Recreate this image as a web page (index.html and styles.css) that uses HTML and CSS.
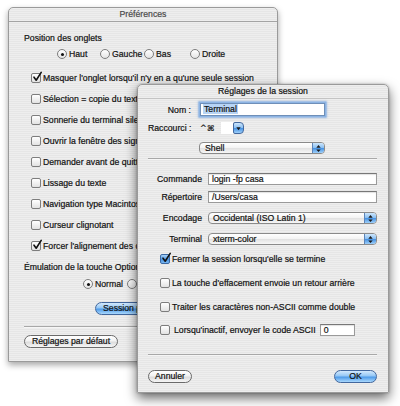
FILE: index.html
```html
<!DOCTYPE html>
<html lang="fr">
<head>
<meta charset="utf-8">
<title>Préférences</title>
<link rel="stylesheet" href="styles.css">
</head>
<body>
<section class="win win-back">
  <header class="titlebar">Préférences</header>
  <div class="back-body">
    <div class="line first">Position des onglets</div>
    <div class="radio-grid">
      <label class="opt"><span class="radio on"></span>Haut</label>
      <label class="opt"><span class="radio"></span>Gauche</label>
      <label class="opt"><span class="radio"></span>Bas</label>
      <label class="opt"><span class="radio"></span>Droite</label>
    </div>
    <ul class="checks">
      <li><span class="cb on"><svg viewBox="0 0 10 10"><path d="M2 5.2 L4.2 8.2 L9.2 0.4"/></svg></span>Masquer l'onglet lorsqu'il n'y en a qu'une seule session</li>
      <li><span class="cb"></span>Sélection = copie du texte</li>
      <li><span class="cb"></span>Sonnerie du terminal silencieuse</li>
      <li><span class="cb"></span>Ouvrir la fenêtre des signets au démarrage</li>
      <li><span class="cb"></span>Demander avant de quitter</li>
      <li><span class="cb"></span>Lissage du texte</li>
      <li><span class="cb"></span>Navigation type Macintosh</li>
      <li><span class="cb"></span>Curseur clignotant</li>
      <li><span class="cb on"><svg viewBox="0 0 10 10"><path d="M2 5.2 L4.2 8.2 L9.2 0.4"/></svg></span>Forcer l'alignement des caractères</li>
    </ul>
    <div class="line emul">Émulation de la touche Option</div>
    <div class="radio-row">
      <label class="opt"><span class="radio on"></span>Normal</label>
      <label class="opt"><span class="radio"></span>Méta</label>
    </div>
    <div class="btn default session">Session par défaut</div>
    <hr class="sep back-sep">
    <div class="btn reset">Réglages par défaut</div>
  </div>
</section>

<section class="win win-front">
  <header class="titlebar">Réglages de la session</header>
  <div class="front-body">
    <div class="top-row r-nom">
      <span class="lbl-top">Nom :</span>
      <div class="field focus"><span class="sel">Terminal</span></div>
    </div>
    <div class="top-row r-rac">
      <span class="lbl-top">Raccourci :</span>
      <span class="keys">^⌘</span>
      <span class="keybox"></span>
      <span class="keybtn"><svg viewBox="0 0 8 8"><path d="M1.5 2.5 L6.5 2.5 L4 6 Z"/></svg></span>
    </div>
    <div class="top-row r-shell">
      <span class="lbl-top"></span>
      <div class="popup shell"><span class="ptext">Shell</span><span class="arrows"><svg viewBox="0 0 8 10"><path d="M4 1 L6.5 4 L1.5 4 Z M4 9 L6.5 6 L1.5 6 Z"/></svg></span></div>
    </div>
    <hr class="sep sep-1">
    <div class="form-row r-cmd">
      <span class="lbl">Commande</span>
      <div class="field">login -fp casa</div>
    </div>
    <div class="form-row r-rep">
      <span class="lbl">Répertoire</span>
      <div class="field">/Users/casa</div>
    </div>
    <div class="form-row r-enc">
      <span class="lbl">Encodage</span>
      <div class="popup"><span class="ptext">Occidental (ISO Latin 1)</span><span class="arrows"><svg viewBox="0 0 8 10"><path d="M4 1 L6.5 4 L1.5 4 Z M4 9 L6.5 6 L1.5 6 Z"/></svg></span></div>
    </div>
    <div class="form-row r-term">
      <span class="lbl">Terminal</span>
      <div class="popup"><span class="ptext">xterm-color</span><span class="arrows"><svg viewBox="0 0 8 10"><path d="M4 1 L6.5 4 L1.5 4 Z M4 9 L6.5 6 L1.5 6 Z"/></svg></span></div>
    </div>
    <div class="chk r-fermer"><span class="cb on blue"><svg viewBox="0 0 10 10"><path d="M2 5.2 L4.2 8.2 L9.2 0.4"/></svg></span>Fermer la session lorsqu'elle se termine</div>
    <div class="chk r-chk"><span class="cb"></span>La touche d'effacement envoie un retour arrière</div>
    <div class="chk r-chk"><span class="cb"></span>Traiter les caractères non-ASCII comme double</div>
    <div class="chk r-idle"><span class="cb"></span><span class="idle-text">Lorsqu'inactif, envoyer le code ASCII</span><div class="field small">0</div></div>
    <hr class="sep sep-2">
    <div class="btn-row">
      <div class="btn cancel">Annuler</div>
      <div class="btn default ok">OK</div>
    </div>
  </div>
</section>
</body>
</html>
```

FILE: styles.css
```css
* { box-sizing: border-box; }
html, body { margin: 0; padding: 0; background: #fff; }
body {
  width: 400px; height: 406px; overflow: hidden; position: relative;
  font-family: "Liberation Sans", Arial, "DejaVu Sans", sans-serif;
  font-size: 8.7px; color: #111;
  -webkit-text-stroke: 0.2px currentColor;
}

/* windows on the desktop */
.win {
  position: absolute;
  display: flex; flex-direction: column;
  background: repeating-linear-gradient(to bottom, #eeeeee 0 1px, #e6e6e6 1px 2px);
  border: 1px solid #9a9a9a;
  border-radius: 5px 5px 0 0;
  overflow: hidden;
}
.win-back { left: 8px; top: 7px; width: 270px; height: 355px; z-index: 1;
  box-shadow: 0 3px 6px rgba(0,0,0,0.35); }
.win-front { left: 137px; top: 84px; width: 252px; height: 309px; z-index: 2;
  box-shadow: 0 5px 12px rgba(0,0,0,0.6), 0 0 2px rgba(0,0,0,0.3); }

.titlebar {
  flex: none; height: 14px; line-height: 13px; text-align: center;
  border-bottom: 1px solid #a4a4a4; color: #4a4a4a;
}
.win-front .titlebar { color: #111; border-bottom-color: #c4c4c4; }

/* shared controls */
.line { height: 12px; line-height: 12px; white-space: nowrap; }
.opt { display: flex; align-items: center; gap: 2px; white-space: nowrap; height: 12px; }
.radio {
  flex: none; width: 10px; height: 10px; border-radius: 50%;
  border: 1px solid #7d7d7d;
  background: linear-gradient(#ffffff, #e4e4e4);
  display: inline-flex; align-items: center; justify-content: center;
}
.radio.on::after { content: ""; width: 3px; height: 3px; border-radius: 50%; background: #111; }
.cb {
  flex: none; width: 10px; height: 10px; border-radius: 2px;
  border: 1px solid #7d7d7d;
  background: linear-gradient(#ffffff, #e2e2e2);
  position: relative; margin-right: 2px;
}
.cb svg { position: absolute; left: 0; top: -2px; width: 10px; height: 10px; overflow: visible; }
.cb svg path { fill: none; stroke: #111; stroke-width: 1.6; stroke-linecap: round; stroke-linejoin: round; }
.cb.blue { background: linear-gradient(#a9d2f8, #4b95e3 55%, #78b5f0); border-color: #3c6aa5; }

.btn {
  height: 13px; line-height: 11px; white-space: nowrap;
  display: flex; align-items: center; justify-content: center;
  border: 1px solid #6a6a6a; border-radius: 7px;
  background: linear-gradient(#ffffff, #f2f2f2 45%, #dcdcdc 55%, #f6f6f6);
  color: #111;
}
.btn.default {
  background: linear-gradient(#d3e9fd, #94c7f5 45%, #4f9be9 55%, #a9d8fd);
  border-color: #42679d;
}

.sep { border: 0; border-top: 1px solid #a8a8a8; border-bottom: 1px solid #f6f6f6; height: 0; margin: 0; }

.field {
  height: 12px; line-height: 10px; padding: 0 3px; white-space: nowrap; overflow: hidden;
  background: #fff; border: 1px solid #9a9a9a; border-top-color: #777;
  box-shadow: inset 0 1px 1px rgba(0,0,0,0.12);
}
.popup {
  height: 12px; display: flex; align-items: center; overflow: hidden;
  border: 1px solid #8a8a8a; border-radius: 4px;
  background: linear-gradient(#ffffff, #f3f3f3 50%, #e3e3e3 55%, #f7f7f7);
}
.ptext { padding-left: 4px; white-space: nowrap; }
.arrows {
  margin-left: auto; flex: none; width: 12px; height: 100%;
  border-left: 1px solid #5c84b8;
  background: linear-gradient(#cde6fc, #86bdf2 50%, #4a94e3 55%, #9fd0fa);
  display: flex; align-items: center; justify-content: center;
}
.arrows svg { width: 7px; height: 9px; }
.arrows svg path, .keybtn svg path { fill: #1a1a1a; }

/* back window */
.back-body { padding: 0 15px; display: flex; flex-direction: column; }
.line.first { margin-top: 10px; }
.radio-grid {
  margin-top: 4px; padding-left: 33px;
  display: grid; grid-template-columns: 43px 44px 46px auto;
}
.checks { list-style: none; margin: 12px 0 0; padding: 0 0 0 7px; display: flex; flex-direction: column; gap: 9px; }
.checks li { height: 12px; display: flex; align-items: center; white-space: nowrap; }
.line.emul { margin-top: 9px; }
.radio-row { margin-top: 5px; padding-left: 59px; display: flex; gap: 4px; }
.btn.session { margin: 12px 0 0 71px; width: 96px; justify-content: flex-start; padding-left: 7px; }
.back-sep { margin-top: 11px; }
.btn.reset { margin-top: 7px; width: 94px; align-self: flex-start; }

/* front window */
.front-body { padding: 0 11px 0 10px; display: flex; flex-direction: column; }
.top-row { display: flex; align-items: center; }
.lbl-top { flex: none; width: 43px; text-align: right; white-space: nowrap; margin-right: 8px; }
.r-nom { margin-top: 4px; height: 13px; }
.field.focus {
  width: 125px; height: 13px; margin-left: 1px;
  box-shadow: 0 0 0 1.5px #8db4e3, 0 0 2px 2px rgba(110,160,220,0.5);
  border-color: #6f8fb8;
}
.sel { background: #b7d4f5; padding: 0 1px; margin-left: -1px; }
.r-rac { margin-top: 6px; height: 12px; }
.keys { margin-left: 1px; width: 21px; font-family: "DejaVu Sans", sans-serif; font-size: 8px; }
.keybox { width: 12px; height: 12px; background: #fff; }
.keybtn {
  width: 11px; height: 12px; border: 1px solid #44699f; border-radius: 2px 4px 4px 2px;
  background: linear-gradient(#cde6fc, #86bdf2 50%, #4a94e3 55%, #9fd0fa);
  display: flex; align-items: center; justify-content: center;
}
.keybtn svg { width: 7px; height: 7px; }
.r-shell { margin-top: 8px; height: 12px; }
.popup.shell { width: 126px; }
.popup.shell .ptext { padding-left: 5px; }
.sep-1 { margin-top: 4px; }

.form-row { display: grid; grid-template-columns: 54px 1fr; column-gap: 6px; align-items: center; height: 12px; }
.lbl { text-align: right; white-space: nowrap; }
.r-cmd { margin-top: 13px; }
.r-rep { margin-top: 6px; }
.r-enc { margin-top: 9px; }
.r-term { margin-top: 9px; }

.chk { display: flex; align-items: center; height: 10px; padding-left: 12px; white-space: nowrap; }
.r-fermer { margin-top: 9px; }
.r-chk { margin-top: 14px; }
.r-idle { margin-top: 12px; height: 12px; }
.idle-text { margin-left: 2px; }
.field.small { width: 35px; margin-left: 4px; }
.sep-2 { margin-top: 18px; }
.btn-row { margin-top: 14px; display: flex; justify-content: space-between; }
.btn.cancel { width: 44px; }
.btn.ok { width: 43px; }
```
